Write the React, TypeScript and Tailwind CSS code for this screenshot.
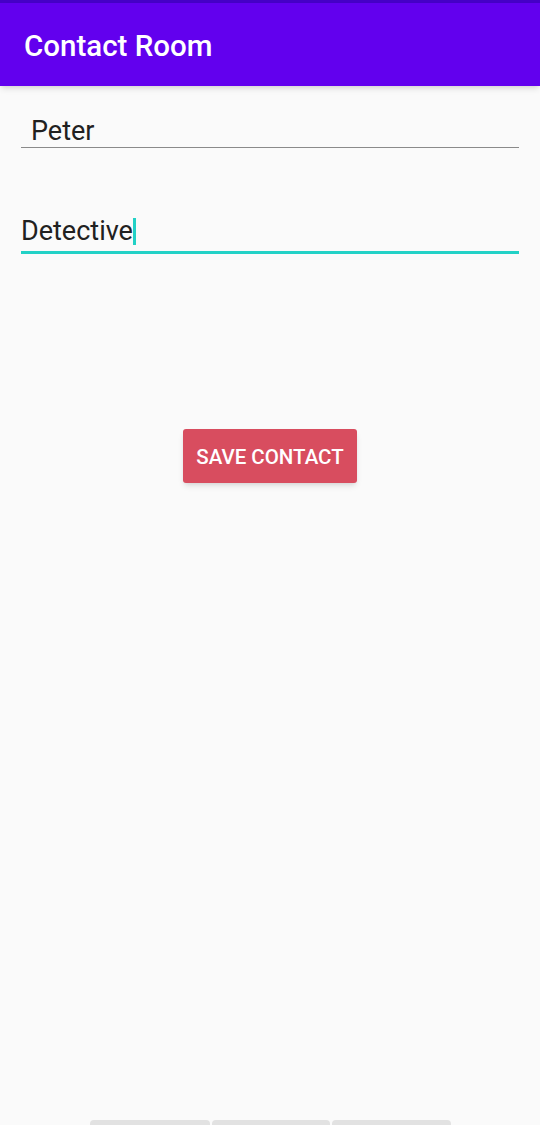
export default function App() {
  return (
    <div className="flex h-[1125px] w-[540px] flex-col overflow-hidden bg-[#fafafa] font-['Roboto',sans-serif]">

      <div className="h-[3px] bg-[#4500c6]" />

      <div className="flex h-[83px] items-center bg-[#6200ee] px-6 pt-[3px] shadow-md">
        <h1 className="text-[29.5px] font-medium text-white">
          Contact Room
        </h1>
      </div>

      <div className="px-[21px] pt-[29px]">

        <div className="border-b-[1.5px] border-[#8a8a8a] pl-[10px]">
          <span className="text-[27px] leading-[32px] text-[#212121]">
            Peter
          </span>
        </div>

        <div className="mt-[67px] flex items-center border-b-[3px] border-[#22d1c6] pb-[4px]">
          <span className="text-[27px] leading-[32px] text-[#212121]">
            Detective
          </span>
          <span className="h-[27px] w-[3px] bg-[#22d1c6]" />
        </div>

      </div>

      <div className="mt-[175px] flex justify-center">
        <button className="h-[54px] w-[174px] rounded-[3px] bg-[#d84d5f] pt-[2px] text-[20.5px] font-medium text-white shadow-md">
          SAVE CONTACT
        </button>
      </div>

      <div className="flex-1" />

      <div className="flex h-[5px] justify-center gap-[2px]">
        <div className="w-[120px] rounded-t-sm bg-[#e2e2e2]" />
        <div className="w-[118px] rounded-t-sm bg-[#e2e2e2]" />
        <div className="w-[119px] rounded-t-sm bg-[#e2e2e2]" />
      </div>

    </div>
  );
}
